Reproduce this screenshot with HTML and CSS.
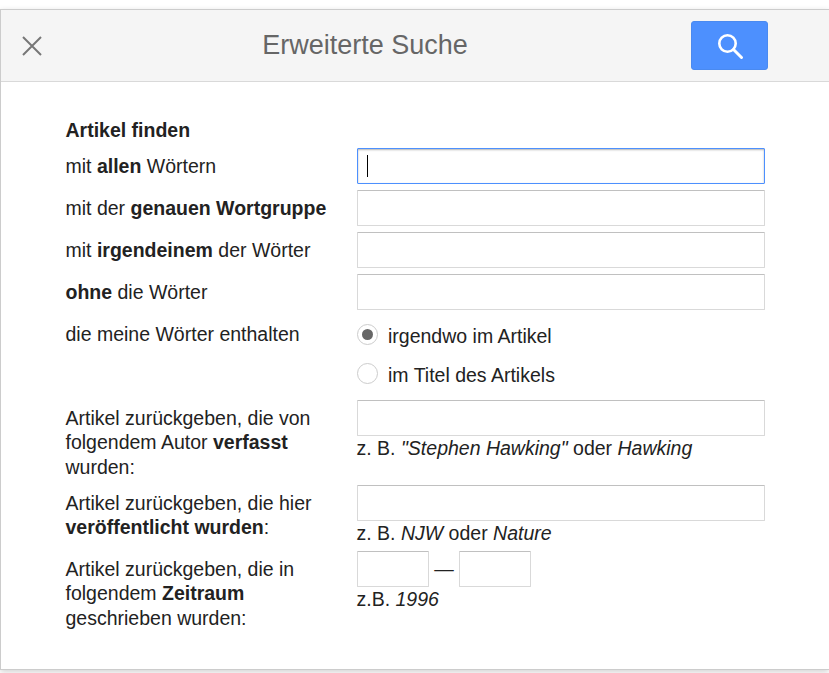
FILE: index.html
```html
<!DOCTYPE html>
<html lang="de">
<head>
<meta charset="utf-8">
<title>Erweiterte Suche</title>
<link rel="stylesheet" href="styles.css">
</head>
<body>
<div class="dialog">
  <header class="head">
    <svg class="close" width="22" height="22" viewBox="0 0 22 22"><path d="M2 2 20 20M20 2 2 20" fill="none" stroke="#777" stroke-width="2"/></svg>
    <h1 class="title">Erweiterte Suche</h1>
    <button class="search" type="button" aria-label="Suchen">
      <svg width="28" height="28" viewBox="0 0 28 28"><circle cx="11.5" cy="11.5" r="8.2" fill="none" stroke="#fff" stroke-width="2.6"/><path d="M17.5 17.5 25.5 25.5" fill="none" stroke="#fff" stroke-width="3" stroke-linecap="round"/></svg>
    </button>
  </header>
  <form class="form">
    <div class="heading"><b>Artikel finden</b></div>
    <div class="row r1"><label class="lab">mit <b>allen</b> Wörtern</label><div class="field"><div class="box focus"><span class="caret"></span></div></div></div>
    <div class="row r1"><label class="lab">mit der <b>genauen Wortgruppe</b></label><div class="field"><div class="box"></div></div></div>
    <div class="row r1"><label class="lab">mit <b>irgendeinem</b> der Wörter</label><div class="field"><div class="box"></div></div></div>
    <div class="row r1"><label class="lab"><b>ohne</b> die Wörter</label><div class="field"><div class="box"></div></div></div>
    <div class="row radios"><label class="lab">die meine Wörter enthalten</label>
      <div class="field">
        <div class="radio"><span class="dot on"></span>irgendwo im Artikel</div>
        <div class="radio"><span class="dot"></span>im Titel des Artikels</div>
      </div>
    </div>
    <div class="row author"><label class="lab multi">Artikel zurückgeben, die von folgendem Autor <b>verfasst</b> wurden:</label><div class="field"><div class="box"></div><div class="hint">z. B. <i>"Stephen Hawking"</i> oder <i>Hawking</i></div></div></div>
    <div class="row pub"><label class="lab multi">Artikel zurückgeben, die hier <b>veröffentlicht wurden</b>:</label><div class="field"><div class="box"></div><div class="hint">z. B. <i>NJW</i> oder <i>Nature</i></div></div></div>
    <div class="row"><label class="lab multi">Artikel zurückgeben, die in folgendem <b>Zeitraum</b> geschrieben wurden:</label><div class="field"><div class="years"><div class="box year"></div><span class="dash">—</span><div class="box year"></div></div><div class="hint">z.B. <i>1996</i></div></div></div>
  </form>
</div>
</body>
</html>
```
FILE: styles.css
```css
html, body { margin: 0; padding: 0; background: #fff; }
body { height: 673px; overflow: hidden; font-family: "Liberation Sans", Arial, sans-serif; font-size: 19.5px; color: #222; }
.dialog { margin-top: 9px; height: 661px; box-sizing: border-box; border: 1px solid #ccc; border-right: 0; box-shadow: 0 2px 6px rgba(0,0,0,.18); background: #fff; }
.head { height: 72px; box-sizing: border-box; background: #f5f5f5; border-bottom: 1px solid #d9d9d9; display: flex; align-items: center; padding-left: 20px; padding-right: 60px; }
.close { flex: none; }
.title { flex: 1; margin: 0; padding-right: 5px; text-align: center; font-size: 27px; font-weight: 400; color: #666; }
.search { width: 77px; height: 49px; flex: none; padding: 0; border: 1px solid #4a8af0; border-radius: 3px; background: #4d90fe; display: flex; align-items: center; justify-content: center; margin-left: -1px; margin-right: 1px; }
.form { padding: 25px 63px 0 64.5px; }
.heading { height: 41px; line-height: 46px; }
.row { display: flex; }
.r1 { height: 42px; }
.lab { width: 291.5px; flex: none; line-height: 37px; height: 36px; }
.lab.multi { height: auto; line-height: 24.4px; padding-right: 10px; box-sizing: border-box; padding-top: 6px; }
.field { width: 408px; }
.box { height: 36px; box-sizing: border-box; border: 1px solid #d9d9d9; border-top-color: #c0c0c0; border-radius: 1px; background: #fff; position: relative; }
.focus { border: 1px solid #4d90fe; box-shadow: inset 0 1px 2px rgba(0,0,0,.3); }
.caret { position: absolute; left: 9px; top: 6px; width: 1px; height: 22px; background: #000; }
.radios { height: 84px; }
.radio { height: 38.5px; box-sizing: border-box; padding-top: 2px; line-height: 36px; display: flex; align-items: center; }
.dot { width: 21px; height: 21px; box-sizing: border-box; border: 1px solid #ccc; border-radius: 50%; margin: 0 10px 3.5px 0; position: relative; background: #fff; }
.dot.on::after { content: ""; position: absolute; left: 4px; top: 4px; width: 11px; height: 11px; border-radius: 50%; background: #666; }
.hint { line-height: 24px; margin-left: -0.5px; }
.author { height: 85px; }
.pub { height: 66px; }
.years { display: flex; align-items: center; }
.year { width: 72px; }
.dash { width: 30px; text-align: center; }
```
